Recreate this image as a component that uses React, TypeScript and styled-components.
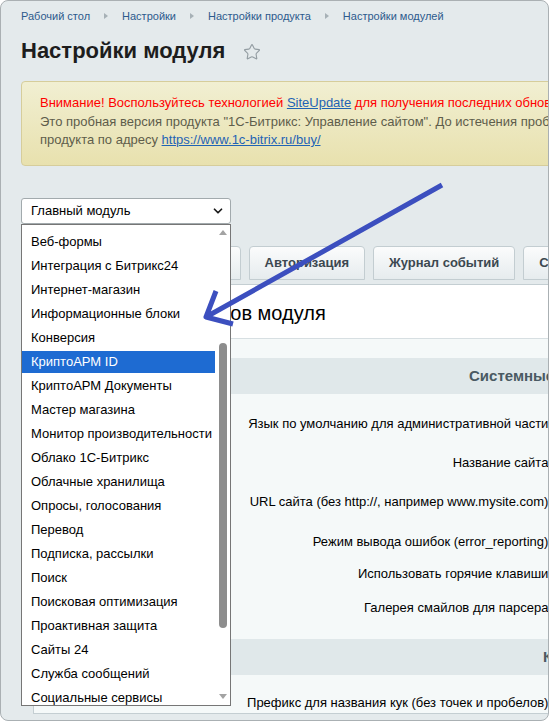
import React from "react";
import styled, { createGlobalStyle } from "styled-components";
import { ChevronDown, Star } from "lucide-react";

const GlobalStyle = createGlobalStyle`
  html, body {
    margin: 0;
    padding: 0;
    background: #ffffff;
  }
  body {
    font-family: "Liberation Sans", Arial, sans-serif;
  }
`;

const Frame = styled.div`
  position: relative;
  width: 549px;
  height: 721px;
  box-sizing: border-box;
  border: 1px solid #aab0b3;
  border-radius: 8px;
  overflow: hidden;
  background: #e4eaec;
`;

const Page = styled.div`
  width: 1100px;
  padding-left: 20px;
`;

/* breadcrumbs */
const Crumbs = styled.nav`
  display: flex;
  align-items: center;
  padding-top: 8px;
  font-size: 11px;
  line-height: 14px;
  color: #2d5a8c;
  white-space: nowrap;
`;

const CrumbSep = styled.span`
  width: 0;
  height: 0;
  margin: 0 14px;
  border-left: 4px solid #a7b1b6;
  border-top: 3.5px solid transparent;
  border-bottom: 3.5px solid transparent;
`;

/* page title */
const TitleRow = styled.div`
  display: flex;
  align-items: center;
  gap: 18px;
  margin-top: 15px;
`;

const Title = styled.h1`
  margin: 0;
  font-size: 22px;
  line-height: 26px;
  font-weight: bold;
  color: #1d1d1d;
`;

const FavStar = styled(Star)`
  color: #939da2;
  margin-top: 2px;
`;

/* trial notice */
const Notice = styled.div`
  margin-top: 17px;
  width: 720px;
  box-sizing: border-box;
  border: 1px solid #d6cd9b;
  border-radius: 4px;
  background: linear-gradient(#f1efd2, #e8e1ae);
  padding: 12px 0 15px 18px;
  font-size: 13px;
  line-height: 18.5px;
`;

const Warn = styled.div`
  color: #ff0000;
  white-space: nowrap;
`;

const Info = styled.div`
  color: #5e5d4b;
  white-space: nowrap;
`;

const Link = styled.a`
  color: #1f63b5;
  text-decoration: underline;
`;

/* module select with its open list */
const SelectWrap = styled.div`
  position: relative;
  z-index: 5;
  width: 210px;
  margin-top: 32px;
`;

const SelectBox = styled.div`
  height: 26px;
  box-sizing: border-box;
  display: flex;
  align-items: center;
  justify-content: space-between;
  padding: 0 5px 0 9px;
  border: 1px solid #a2aaad;
  border-radius: 3px;
  background: #ffffff;
  font-size: 13px;
  color: #000000;
`;

const DropList = styled.div`
  position: absolute;
  top: 100%;
  left: 0;
  width: 210px;
  height: 482px;
  box-sizing: border-box;
  display: flex;
  align-items: stretch;
  border: 1px solid #767676;
  background: #ffffff;
  overflow: hidden;
`;

const Options = styled.div`
  flex: 1;
  min-width: 0;
  height: 100%;
  overflow: hidden;
  padding-top: 4px;
  box-sizing: border-box;
`;

const Option = styled.div<{ $selected?: boolean }>`
  height: 22px;
  margin: 2px 0;
  padding-left: 9px;
  line-height: 22px;
  font-size: 13px;
  white-space: nowrap;
  color: ${(p) => (p.$selected ? "#ffffff" : "#000000")};
  background: ${(p) => (p.$selected ? "#1e6bd2" : "transparent")};
`;

const Scrollbar = styled.div`
  width: 15px;
  height: 100%;
  flex: none;
  display: flex;
  flex-direction: column;
  align-items: center;
`;

const ArrowBox = styled.div`
  height: 16px;
  flex: none;
  display: flex;
  align-items: center;
  justify-content: center;
`;

const Tri = styled.span<{ $down?: boolean }>`
  width: 0;
  height: 0;
  border-left: 4px solid transparent;
  border-right: 4px solid transparent;
  ${(p) =>
    p.$down
      ? "border-top: 5px solid #a3a3a3;"
      : "border-bottom: 5px solid #a3a3a3;"}
`;

const Track = styled.div`
  flex: 1;
  min-height: 0;
`;

const Thumb = styled.div<{ $offset: number; $size: number }>`
  width: 8px;
  margin-top: ${(p) => p.$offset}px;
  height: ${(p) => p.$size}px;
  border-radius: 4px;
  background: #8d8d8d;
`;

/* tabs */
const Tabs = styled.div`
  display: flex;
  gap: 8px;
  margin-top: 22px;
  padding-left: 119px;
`;

const Tab = styled.div`
  height: 34px;
  box-sizing: border-box;
  padding: 0 15px;
  border: 1px solid #c3cdd1;
  border-radius: 4px 4px 0 0;
  background: linear-gradient(#fbfcfc, #e6ecee);
  font-size: 13px;
  font-weight: bold;
  line-height: 32px;
  color: #3c4850;
  white-space: nowrap;
`;

/* settings panel */
const Panel = styled.div`
  width: 1000px;
  margin: 4px 0 0 12px;
  box-sizing: border-box;
  border: 1px solid #c4ced2;
  background: #f5f9f9;
`;

const PanelHead = styled.div`
  background: #ffffff;
  border-bottom: 1px solid #d7dfe2;
  padding: 16px 0 13px 4px;
  font-size: 20px;
  line-height: 24px;
  color: #000000;
  white-space: nowrap;
`;

const PanelBody = styled.div`
  padding-top: 19px;
`;

const Heading = styled.div<{ $indent: number }>`
  height: 36px;
  padding-left: ${(p) => p.$indent}px;
  background: #e0e8ea;
  font-size: 15px;
  font-weight: bold;
  line-height: 36px;
  color: #4a5a62;
  white-space: nowrap;
`;

const Fields = styled.div<{ $top: number }>`
  padding-top: ${(p) => p.$top}px;
`;

const Row = styled.div<{ $h: number }>`
  display: grid;
  grid-template-columns: 518px 1fr;
  height: ${(p) => p.$h}px;
`;

const Label = styled.div`
  text-align: right;
  padding-top: 6px;
  font-size: 13px;
  line-height: 16px;
  color: #000000;
  white-space: nowrap;
`;

/* hand-drawn pointer on top of the page */
const Pointer = styled.svg`
  position: absolute;
  left: -1px;
  top: -1px;
  z-index: 10;
  pointer-events: none;
`;

const modules = [
  "Веб-формы",
  "Интеграция с Битрикс24",
  "Интернет-магазин",
  "Информационные блоки",
  "Конверсия",
  "КриптоАРМ ID",
  "КриптоАРМ Документы",
  "Мастер магазина",
  "Монитор производительности",
  "Облако 1С-Битрикс",
  "Облачные хранилища",
  "Опросы, голосования",
  "Перевод",
  "Подписка, рассылки",
  "Поиск",
  "Поисковая оптимизация",
  "Проактивная защита",
  "Сайты 24",
  "Служба сообщений",
  "Социальные сервисы",
  "Социальная сеть",
];

const systemFields: { label: string; h: number }[] = [
  { label: "Язык по умолчанию для административной части:", h: 39 },
  { label: "Название сайта:", h: 39 },
  { label: "URL сайта (без http://, например www.mysite.com):", h: 40 },
  { label: "Режим вывода ошибок (error_reporting):", h: 32 },
  { label: "Использовать горячие клавиши:", h: 34 },
  { label: "Галерея смайлов для парсера:", h: 45 },
];

export default function App() {
  return (
    <>
      <GlobalStyle />
      <Frame>
        <Page>
          <Crumbs>
            <span>Рабочий стол</span>
            <CrumbSep />
            <span>Настройки</span>
            <CrumbSep />
            <span>Настройки продукта</span>
            <CrumbSep />
            <span>Настройки модулей</span>
          </Crumbs>

          <TitleRow>
            <Title>Настройки модуля</Title>
            <FavStar size={18} strokeWidth={1.5} />
          </TitleRow>

          <Notice>
            <Warn>
              Внимание! Воспользуйтесь технологией <Link href="#">SiteUpdate</Link> для
              получения последних обновлений.
            </Warn>
            <Info>
              Это пробная версия продукта "1С-Битрикс: Управление сайтом". До истечения
              пробного периода осталось 30 дней. Приобрести полную версию
            </Info>
            <Info>
              продукта по адресу <Link href="#">https://www.1c-bitrix.ru/buy/</Link>
            </Info>
          </Notice>

          <SelectWrap>
            <SelectBox>
              <span>Главный модуль</span>
              <ChevronDown size={14} strokeWidth={3} color="#1a1a1a" />
            </SelectBox>
            <DropList>
              <Options>
                {modules.map((m) => (
                  <Option key={m} $selected={m === "КриптоАРМ ID"}>
                    {m}
                  </Option>
                ))}
              </Options>
              <Scrollbar>
                <ArrowBox>
                  <Tri />
                </ArrowBox>
                <Track>
                  <Thumb $offset={102} $size={285} />
                </Track>
                <ArrowBox>
                  <Tri $down />
                </ArrowBox>
              </Scrollbar>
            </DropList>
          </SelectWrap>

          <Tabs>
            <Tab>Настройки</Tab>
            <Tab>Авторизация</Tab>
            <Tab>Журнал событий</Tab>
            <Tab>Система обновлений</Tab>
          </Tabs>

          <Panel>
            <PanelHead>Настройки параметров модуля</PanelHead>
            <PanelBody>
              <Heading $indent={435}>Системные настройки</Heading>
              <Fields $top={16}>
                {systemFields.map((f) => (
                  <Row key={f.label} $h={f.h}>
                    <Label>{f.label}</Label>
                    <div />
                  </Row>
                ))}
              </Fields>
              <Heading $indent={509}>Куки (cookies)</Heading>
              <Fields $top={14}>
                <Row $h={24}>
                  <Label>Префикс для названия кук (без точек и пробелов):</Label>
                  <div />
                </Row>
              </Fields>
            </PanelBody>
          </Panel>
        </Page>

        <Pointer width="549" height="721" viewBox="0 0 549 721">
          <path
            d="M442 185 L206 317 M216 291 L206 317 L233 324"
            fill="none"
            stroke="#3c4fbf"
            strokeWidth="5"
            strokeLinejoin="round"
          />
        </Pointer>
      </Frame>
    </>
  );
}
